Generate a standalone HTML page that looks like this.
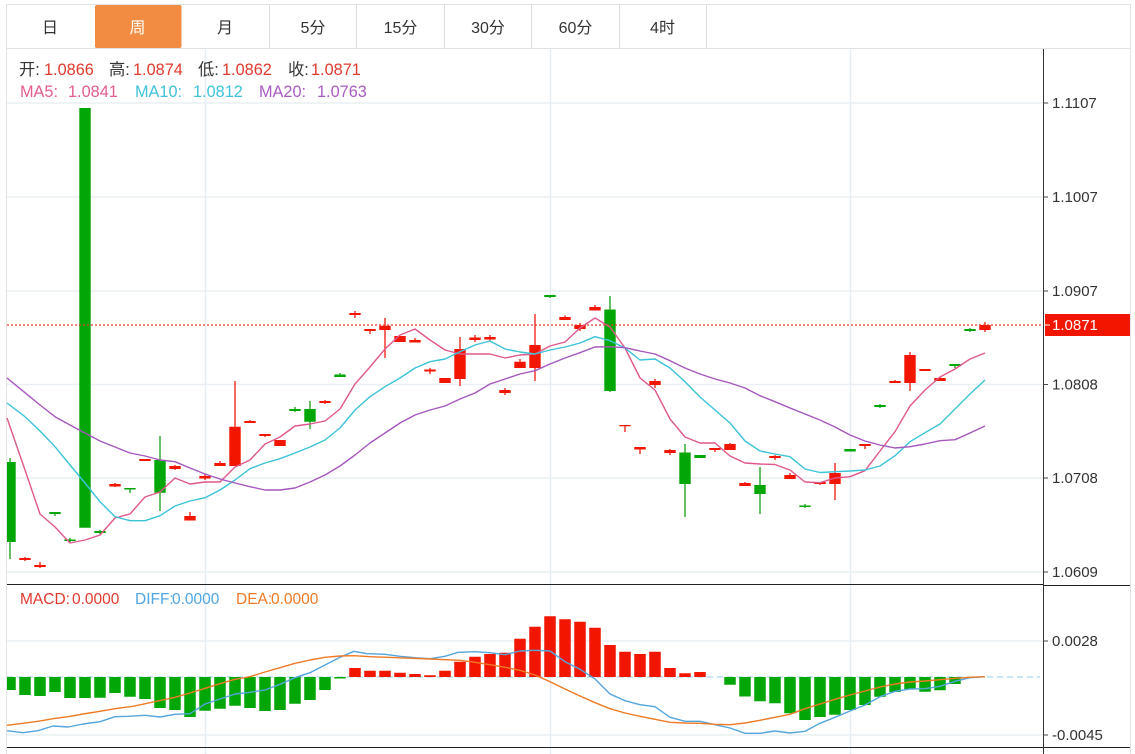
<!DOCTYPE html>
<html><head><meta charset="utf-8"><style>
html,body{margin:0;padding:0;background:#fff;width:1135px;height:754px;overflow:hidden}
svg{display:block}
text{font-family:"Liberation Sans","Noto Sans CJK SC",sans-serif}
.t{font-size:16px;fill:#333;text-anchor:middle}
.a{font-size:15px;fill:#333}
.l{font-size:16.300px}
.ln{fill:none;stroke-width:1.400;stroke-linejoin:round}
</style></head><body>
<svg width="1135" height="754" viewBox="0 0 1135 754" xmlns="http://www.w3.org/2000/svg">
<rect width="1135" height="754" fill="#fff"/>
<!-- grid -->
<path d="M7 103H1043M7 197H1043M7 291H1043M7 384.500H1043M7 478H1043M7 572H1043M7 641H1043M7 735H1043" stroke="#e9eff4" stroke-width="1.5" fill="none"/>
<path d="M205.500 49V754M550.500 49V754M850.500 49V754" stroke="#e6eef5" stroke-width="1.500" fill="none"/>
<!-- tabs -->
<path d="M6.500 4.500H1130.500V754M6.500 4.500V754M6 48.500H1130" stroke="#e0e2e4" stroke-width="1" fill="none"/>
<path d="M269.500 5V48M356.500 5V48M444.500 5V48M531.500 5V48M619.500 5V48M706.500 5V48" stroke="#dcdee0" stroke-width="1" fill="none"/>
<rect x="95" y="5" width="86.500" height="43" rx="2" fill="#f28c42"/>
<text class="t" x="50" y="33">日</text>
<text class="t" x="137.500" y="33" style="fill:#fff">周</text>
<text class="t" x="225" y="33">月</text>
<text class="t" x="313" y="33">5分</text>
<text class="t" x="400.500" y="33">15分</text>
<text class="t" x="488" y="33">30分</text>
<text class="t" x="575.500" y="33">60分</text>
<text class="t" x="662.500" y="33">4时</text>
<!-- candle wicks -->
<g fill="none">
<path stroke="#149f14" stroke-width="1.300" d="M10 458V559M55 512V516M70 538V542M100 530V534M130 488V493M160 436V511M295 407V412M310 401V429M340 373V377M550 295V298M610 296V392M685 444V517M760 467V514M805 504V508M850 449V451M880 404V408M955 364V368M970 328V332"/>
<path stroke="#f0190a" stroke-width="1.300" d="M25 557V561M40 562V568M115 483V487M175 465V470M190 512V520M205 474V480M220 461V466M235 381V466M250 420V423M265 434V437M325 400V404M355 311V318M370 329V334M385 318V358M415 338V342M430 368V374M460 337V386M475 335V342M490 335V341M505 388V395M520 359V368M535 314V381M565 315.500V320M580 323V331M595 305V310M625 425V432M640 447V454M655 379V388M670 449V455M715 448V452M730 443V450M745 482V486M775 455V460M790 473V479M820 482V485M835 463V500M865 444V449M895 380V383M910 352V391M940 377V381M985 322V332"/>
<!-- candle bodies -->
<path stroke="#02a606" stroke-width="11.400" d="M10 462V542M55 512V514M70 539.500V541M85 108V527.700M100 531V533M130 488V489.500M160 460V492.700M295 409V411M310 409V421.700M340 374.500V377M550 295V297M610 309.500V391M685 452.500V484M700 455V458M760 485V494M805 505.500V507M850 449V451.500M880 405V407M955 364V366M970 329V331"/>
<path stroke="#f21500" stroke-width="11.400" d="M25 558V560M40 565V567M115 484V486.500M145 459V461M175 466V469M190 516V520.500M205 476V478.500M220 463V466M235 426.700V466M250 421V423M265 434V436M280 440V446M325 401V403M355 313V315M370 329V331M385 325.700V330M400 336V342M415 340V342.500M430 369.500V371.500M445 378V383M460 349V379M475 337.500V340M490 337V339.500M505 390V393M520 361.700V368M535 345V368M565 317V320M580 325V329M595 307V310.500M625 425V426.300M640 447V449.500M655 381V385M670 450V453M715 448V450M730 444V450M745 483V486M775 456V458M790 475V479M820 482V484M835 473V484M865 444V446M895 381V383M910 355V383M925 369V371M940 378V381M985 325V330"/>
</g>
<rect x="0" y="300" width="6" height="300" fill="#fff"/><path d="M6.500 300V600" stroke="#e0e2e4" fill="none"/>
<!-- last price dotted -->
<path d="M7 325H1043" stroke="#ea3a2c" stroke-width="1.200" stroke-dasharray="2 2" fill="none"/>
<!-- MA lines -->
<polyline class="ln" stroke="#e0578c" points="7,418 25,470 40,514 55,527 70,543 85,540 100,535 115,518 130,514 145,497 160,492 175,478 190,484 205,482 220,482 235,467 250,460 265,444 280,437 295,426 310,424 325,421 340,409 355,384 370,367 385,349 400,335 415,329 430,340 445,350 460,354 475,354 490,354 505,358 520,355 535,354 550,346 565,342 580,328 595,318 610,327 625,348 640,378 655,390 670,419 685,437 700,443 715,443 730,456 745,463 760,464 775,464.500 790,470 805,482 820,482.700 835,478 850,476.700 865,470.700 880,451 895,431.700 910,406 925,390 940,377 955,369 970,359 985,353"/>
<polyline class="ln" stroke="#3cc3d8" points="7,403 25,416.700 40,431 55,446.700 70,465 85,483 100,501.700 115,516.700 130,520.700 145,520.700 160,515.700 175,506 190,501 205,497.700 220,490 235,480 250,468.700 265,463 280,458.700 295,453 310,447 325,440 340,428 355,410 370,396.700 385,386.700 400,378 415,368 430,361.700 445,359 460,351.700 475,345 490,341 505,349 520,352 535,354 550,350 565,347 580,343 595,336.700 610,340.700 625,348 640,360 655,359 670,368 685,381.700 700,397 715,410 730,423 745,441 760,451 775,454 790,456.700 805,469 820,472.500 835,471.700 850,471 865,470 880,466 895,455.700 910,441.700 925,432.700 940,424 955,409 970,394 985,380"/>
<polyline class="ln" stroke="#a657bd" points="7,378 25,392.700 40,405 55,416.700 70,425 85,433 100,441 115,447 130,453 145,456 160,460 175,461.700 190,468 205,474 220,479 235,483 250,486.700 265,490 280,490 295,488 310,482 325,475 340,466 355,455 370,443 385,433 400,423 415,415 430,410 445,406 460,399 475,393 490,384 505,379 520,374 535,370.700 550,364 565,358 580,352.700 595,347 610,346.700 625,347.700 640,351 655,354 670,360.700 685,368 700,374 715,379 730,383 745,388 760,395.700 775,401.700 790,408 805,414 820,420 835,427 850,435 865,441 880,445 895,448 910,446.700 925,444 940,440.700 955,439.700 970,433 985,426"/>
<!-- MACD -->
<path d="M7 677H1040" stroke="#a8dcec" stroke-width="1.200" stroke-dasharray="6 4" fill="none"/>
<g fill="none" stroke-width="11.500">
<path stroke="#02a606" d="M10 677V690M25 677V695M40 677V696M55 677V692M70 677V698M85 677V698M100 677V697.700M115 677V693M130 677V696.700M145 677V699M160 677V708M175 677V710M190 677V717M205 677V710.700M220 677V708.700M235 677V705.700M250 677V708M265 677V711M280 677V710M295 677V703.700M310 677V700M325 677V690M730 677V684.700M745 677V696.500M760 677V701.300M775 677V703.300M790 677V713.300M805 677V720M820 677V717M835 677V714.700M850 677V710M865 677V705M880 677V696.700M895 677V692M910 677V689.300M925 677V691.700M940 677V690.300M955 677V684"/>
<path stroke="#02a606" stroke-width="11.500" d="M340 677V678.500"/>
<path stroke="#f21500" d="M355 668V677M370 670.700V677M385 670.700V677M400 672.700V677M415 674V677M430 675.300V677M445 670.700V677M460 661.700V677M475 656.700V677M490 654V677M505 652.700V677M520 638.700V677M535 626.700V677M550 616.300V677M565 619.300V677M580 621.700V677M595 627.700V677M610 645V677M625 651.700V677M640 654V677M655 651.700V677M670 668V677M685 673.300V677M700 672V677"/>
</g>
<rect x="0" y="670" width="6" height="30" fill="#fff"/><path d="M6.500 670V700" stroke="#e0e2e4" fill="none"/>
<polyline class="ln" stroke="#55a5dd" points="7,730.700 23,732.700 38,730.700 53,726 68,727 83,724 100,721.700 115,716.700 128,716.300 145,715.300 160,717 175,714.300 190,713.700 205,704 220,699 235,694 250,692.300 265,690 280,684.300 295,677.700 310,672.700 325,665 340,657.300 354,651.300 367,653.700 385,654.300 400,656.300 415,657.700 430,658.700 445,656.300 458,652.300 475,651.700 490,652.700 505,654.700 520,651 535,650.300 550,651 565,661.700 580,669.300 595,679 610,694 625,700.700 640,704.700 655,706.700 670,717.300 685,721.300 700,721.300 715,724.700 730,728 745,733.300 760,733.300 775,731 790,733 805,731.300 820,723.300 835,717.300 850,711 865,705 880,696.700 895,691.300 910,689 925,688.700 940,686.300 955,681.300 970,677.700 985,676.700"/>
<polyline class="ln" stroke="#ef7a25" points="7,725.300 23,723.300 38,721.300 53,718.700 68,716.700 83,714 100,711.300 115,708.700 133,706.300 150,702.700 175,697.300 190,693 205,688.300 220,683.700 235,679.300 250,676.700 265,672 280,667.700 295,663.300 310,660 325,657.300 340,656 354,655.700 370,656.700 400,657.800 430,659 460,660.300 475,662.300 490,664.700 505,667.300 520,670.300 535,675 550,681.700 565,689 580,696 595,702.700 610,708.700 625,713 640,716.300 655,719.300 670,722.300 685,723 700,723.300 715,724.300 730,724.700 745,723 760,720.300 775,717.300 790,714.300 805,708.700 820,704 835,699.300 850,695 865,691 880,687 895,684 910,682 925,681 940,679.700 955,678.300 970,677.300 985,676.700"/>
<!-- axes -->
<path d="M7 584.500H1043M7 747.500H1130M1043 585.500H1130" stroke="#222" stroke-width="1" fill="none"/>
<path d="M1043.500 49V754" stroke="#333" stroke-width="1" fill="none"/>
<path d="M1043 103H1048M1043 197H1048M1043 291H1048M1043 384.500H1048M1043 478H1048M1043 572H1048M1043 641H1048M1043 735H1048" stroke="#444" stroke-width="1" fill="none"/>
<rect x="1045" y="314" width="85" height="22" fill="#f21500"/>
<path d="M1045 325H1050" stroke="#fff" fill="none"/>
<text class="a" x="1052" y="330" style="fill:#fff">1.0871</text>
<text class="a" x="1052" y="108">1.1107</text>
<text class="a" x="1052" y="202">1.1007</text>
<text class="a" x="1052" y="296">1.0907</text>
<text class="a" x="1052" y="389.500">1.0808</text>
<text class="a" x="1052" y="483">1.0708</text>
<text class="a" x="1052" y="577">1.0609</text>
<text class="a" x="1052" y="646">0.0028</text>
<text class="a" x="1052" y="740">-0.0045</text>
<!-- legends -->
<g class="l">
<text x="19" y="75" fill="#333">开:</text><text x="44" y="75" fill="#e2392d">1.0866</text>
<text x="109" y="75" fill="#333">高:</text><text x="133" y="75" fill="#e2392d">1.0874</text>
<text x="198" y="75" fill="#333">低:</text><text x="222" y="75" fill="#e2392d">1.0862</text>
<text x="288" y="75" fill="#333">收:</text><text x="311" y="75" fill="#e2392d">1.0871</text>
<text x="20" y="97" fill="#e45c90">MA5:</text><text x="68" y="97" fill="#e45c90">1.0841</text>
<text x="135" y="97" fill="#3fc2da">MA10:</text><text x="193" y="97" fill="#3fc2da">1.0812</text>
<text x="259" y="97" fill="#a95cc2">MA20:</text><text x="317" y="97" fill="#a95cc2">1.0763</text>
<text x="20" y="604" fill="#e2392d" style="font-size:15.500px">MACD:</text><text x="72" y="604" fill="#e2392d" style="font-size:15.500px">0.0000</text>
<text x="135" y="604" fill="#4fa6e3" style="font-size:15.500px">DIFF:</text><text x="172" y="604" fill="#4fa6e3" style="font-size:15.500px">0.0000</text>
<text x="236" y="604" fill="#ef7a25" style="font-size:15.500px">DEA:</text><text x="271" y="604" fill="#ef7a25" style="font-size:15.500px">0.0000</text>
</g>
</svg>
</body></html>
